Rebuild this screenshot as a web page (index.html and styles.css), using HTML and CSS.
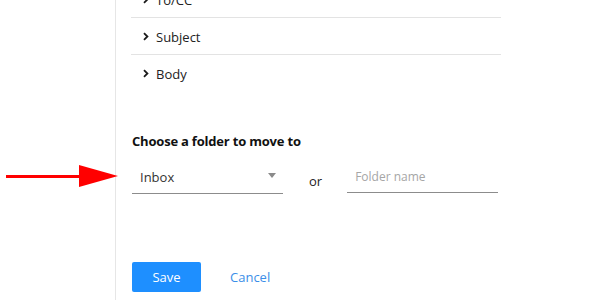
FILE: index.html
```html
<!DOCTYPE html>
<html>
<head>
<meta charset="utf-8">
<link rel="stylesheet" href="styles.css">
</head>
<body>
<div class="page">
  <div class="gutter"></div>
  <svg class="pointer" width="120" height="24" viewBox="0 0 120 24">
    <rect x="6" y="10" width="76" height="3" fill="#ff0000"/>
    <polygon points="79,0 118,11 79,22" fill="#ff0000"/>
  </svg>
  <div class="main">
    <ul class="rules">
      <li class="rule"><span class="chev"><svg width="6" height="9" viewBox="0 0 6 9"><path d="M1 1.2 L4.4 4.5 L1 7.8" fill="none" stroke="#1a1a1a" stroke-width="1.8"/></svg></span>To/CC</li>
      <li class="rule"><span class="chev"><svg width="6" height="9" viewBox="0 0 6 9"><path d="M1 1.2 L4.4 4.5 L1 7.8" fill="none" stroke="#1a1a1a" stroke-width="1.8"/></svg></span>Subject</li>
      <li class="rule last"><span class="chev"><svg width="6" height="9" viewBox="0 0 6 9"><path d="M1 1.2 L4.4 4.5 L1 7.8" fill="none" stroke="#1a1a1a" stroke-width="1.8"/></svg></span>Body</li>
    </ul>
    <h3 class="heading">Choose a folder to move to</h3>
    <div class="move">
      <div class="dropdown">
        <span>Inbox</span>
        <span class="caret"></span>
      </div>
      <span class="or">or</span>
      <div class="field"><span class="placeholder">Folder name</span></div>
    </div>
    <div class="actions">
      <button class="btn-primary">Save</button>
      <button class="btn-link">Cancel</button>
    </div>
  </div>
</div>
</body>
</html>
```
FILE: styles.css
```css
html, body {
  margin: 0;
  padding: 0;
  background: #ffffff;
}
body {
  font-family: "Open Sans", "Noto Sans", sans-serif;
  color: #222222;
  width: 600px;
  height: 300px;
  overflow: hidden;
}
.page {
  position: relative;
  display: flex;
  height: 300px;
}
.gutter {
  width: 115px;
  flex: none;
}
.pointer {
  position: absolute;
  left: 0;
  top: 165px;
}
.main {
  border-left: 1px solid #e6e6e6;
  padding-left: 15px;
  width: 370px;
}
.rules {
  list-style: none;
  margin: -19px 0 0 0;
  padding: 0;
}
.rule {
  height: 36px;
  box-sizing: border-box;
  padding-top: 2px;
  border-bottom: 1px solid #e3e3e3;
  display: flex;
  align-items: center;
  padding-left: 12px;
  font-size: 13px;
  color: #222;
}
.rule:not(.last) {
  height: 37px;
}
.rule.last {
  border-bottom: none;
}
.chev {
  display: inline-flex;
  width: 13px;
  margin-top: -2px;
}
.heading {
  margin: 41px 0 0 1px;
  font-size: 13px;
  line-height: 18px;
  font-weight: 700;
  letter-spacing: -0.2px;
  color: #111;
}
.move {
  display: flex;
  align-items: flex-start;
  margin-top: 16px;
  margin-left: 1px;
}
.dropdown {
  width: 151px;
  height: 28px;
  box-sizing: border-box;
  border-bottom: 1px solid #8c8c8c;
  padding: 0 7px 5px 8px;
  display: flex;
  align-items: center;
  justify-content: space-between;
  font-size: 13px;
  color: #333;
}
.caret {
  width: 0;
  height: 0;
  margin-top: -3px;
  border-left: 4px solid transparent;
  border-right: 4px solid transparent;
  border-top: 5px solid #8a8a8a;
}
.or {
  margin: 6px 25px 0 26px;
  font-size: 13px;
  line-height: 18px;
  color: #222;
}
.field {
  width: 151px;
  height: 28px;
  box-sizing: border-box;
  border-bottom: 1px solid #8c8c8c;
  padding: 0 0 5px 8px;
  margin-top: -1px;
  display: flex;
  align-items: center;
}
.placeholder {
  font-size: 12px;
  color: #a6a6a6;
}
.actions {
  display: flex;
  align-items: center;
  margin-top: 68px;
  margin-left: 1px;
}
.btn-primary {
  width: 69px;
  height: 30px;
  border: none;
  border-radius: 2px;
  background: #1e8fff;
  color: #ffffff;
  font-family: inherit;
  font-size: 13px;
  padding: 0;
}
.btn-link {
  margin-left: 29px;
  border: none;
  background: none;
  padding: 0;
  font-family: inherit;
  font-size: 13px;
  color: #3b8ee8;
}
```
